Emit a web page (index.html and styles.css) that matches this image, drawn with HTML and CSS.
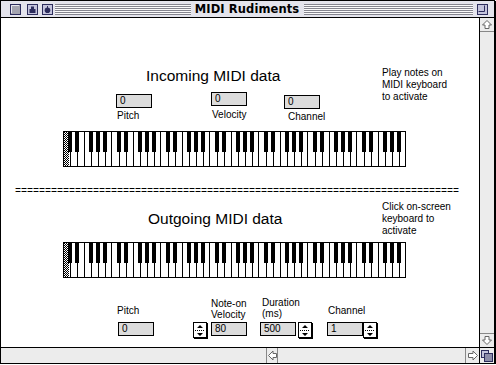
FILE: index.html
```html
<!DOCTYPE html>
<html lang="en">
<head>
	<meta charset="UTF-8">
	<title>MIDI Rudiments</title>
	<link rel="stylesheet" href="styles.css">
</head>
<body>
<div class="window">
	<div class="titlebar">
		<div class="tb_side">
			<svg class="tbox tb_close" width="11" height="11" viewBox="0 0 11 11"><rect x="0.5" y="0.5" width="10" height="10" fill="#a4a4b0" stroke="#2c2c5c"/><path d="M1.5 9V1.5H9" stroke="#e8e8f0" fill="none"/></svg>
			<svg class="tbox tb_two" width="11" height="11" viewBox="0 0 11 11"><rect x="0.5" y="0.5" width="10" height="10" fill="#c4c4dc" stroke="#2c2c5c"/><path d="M4 2.5h3v2.5h-3z M2.5 5h6v4h-6z" fill="#2c2c5c"/></svg>
			<svg class="tbox tb_three" width="11" height="11" viewBox="0 0 11 11"><rect x="0.5" y="0.5" width="10" height="10" fill="#c4c4dc" stroke="#2c2c5c"/><circle cx="5.5" cy="6.3" r="2.8" fill="#2c2c5c"/><rect x="5" y="2" width="1" height="3" fill="#2c2c5c"/></svg>
			<span class="stripes"></span>
		</div>
		<span class="title">MIDI Rudiments</span>
		<div class="tb_side">
			<span class="stripes"></span>
			<svg class="tbox tb_zoom" width="11" height="11" viewBox="0 0 11 11"><rect x="0.5" y="0.5" width="10" height="10" fill="#c4c4dc" stroke="#2c2c5c"/><path d="M1.5 7.5H7.5V1.5" stroke="#2c2c5c" fill="none"/></svg>
		</div>
	</div>

	<div class="main">
		<div class="patcher">
			<div class="obj heading head_in">Incoming MIDI data</div>
			<div class="obj num num_in_pitch">0</div>
			<div class="obj num num_in_vel">0</div>
			<div class="obj num num_in_chan">0</div>
			<div class="obj label lab_in_pitch">Pitch</div>
			<div class="obj label lab_in_vel">Velocity</div>
			<div class="obj label lab_in_chan">Channel</div>
			<div class="obj note note_in">Play notes on<br>MIDI keyboard<br>to activate</div>

			<svg class="obj kslider ks_in" width="343" height="36" viewBox="0 0 343 36">
				<defs>
					<pattern id="octave" width="49" height="36" patternUnits="userSpaceOnUse">
						<path d="M7.5 0V36M14.5 0V36M21.5 0V36M28.5 0V36M35.5 0V36M42.5 0V36M48.5 0V36" stroke="#000"/>
						<rect x="5" y="0" width="4" height="21"/>
						<rect x="12" y="0" width="4" height="21"/>
						<rect x="26" y="0" width="4" height="21"/>
						<rect x="33" y="0" width="4" height="21"/>
						<rect x="40" y="0" width="4" height="21"/>
					</pattern>
					<pattern id="dither" width="2" height="2" patternUnits="userSpaceOnUse">
						<rect width="1" height="1"/>
						<rect x="1" y="1" width="1" height="1"/>
					</pattern>
				</defs>
				<rect width="343" height="36" fill="#fff"/>
				<rect x="1" y="1" width="5" height="34" fill="url(#dither)"/>
				<rect width="343" height="36" fill="url(#octave)"/>
				<rect x="0.5" y="0.5" width="342" height="35" fill="none" stroke="#000"/>
			</svg>

			<div class="obj rule">==========================================================================</div>

			<div class="obj heading head_out">Outgoing MIDI data</div>
			<div class="obj note note_out">Click on-screen<br>keyboard to<br>activate</div>

			<svg class="obj kslider ks_out" width="343" height="36" viewBox="0 0 343 36">
				<rect width="343" height="36" fill="#fff"/>
				<rect x="1" y="1" width="5" height="34" fill="url(#dither)"/>
				<rect width="343" height="36" fill="url(#octave)"/>
				<rect x="0.5" y="0.5" width="342" height="35" fill="none" stroke="#000"/>
			</svg>

			<div class="obj label lab_out_pitch">Pitch</div>
			<div class="obj label lab_out_vel">Note-on<br>Velocity</div>
			<div class="obj label lab_out_dur">Duration<br>(ms)</div>
			<div class="obj label lab_out_chan">Channel</div>

			<div class="obj num num_out_pitch">0</div>
			<svg class="obj spin spin_vel" width="15" height="17" viewBox="0 0 15 17"><rect x="0.5" y="0.5" width="13" height="15" fill="#fff" stroke="#000"/><path d="M14.5 1V17M1 16.5H15" stroke="#000"/><path d="M7 3L4 6H10Z M4 11H10L7 14Z"/><path d="M2 8.5H12" stroke="#000" stroke-dasharray="1 1"/></svg>
			<div class="obj num num_out_vel">80</div>
			<div class="obj num num_out_dur">500</div>
			<svg class="obj spin spin_dur" width="15" height="17" viewBox="0 0 15 17"><rect x="0.5" y="0.5" width="13" height="15" fill="#fff" stroke="#000"/><path d="M14.5 1V17M1 16.5H15" stroke="#000"/><path d="M7 3L4 6H10Z M4 11H10L7 14Z"/><path d="M2 8.5H12" stroke="#000" stroke-dasharray="1 1"/></svg>
			<div class="obj num num_out_chan">1</div>
			<svg class="obj spin spin_chan" width="15" height="17" viewBox="0 0 15 17"><rect x="0.5" y="0.5" width="13" height="15" fill="#fff" stroke="#000"/><path d="M14.5 1V17M1 16.5H15" stroke="#000"/><path d="M7 3L4 6H10Z M4 11H10L7 14Z"/><path d="M2 8.5H12" stroke="#000" stroke-dasharray="1 1"/></svg>
		</div>

		<div class="vscroll">
			<span class="sbtn sbtn_up"><svg width="14" height="13" viewBox="0 0 14 13"><path d="M7 2.5L11.5 7H9V10.5H5V7H2.5Z" fill="#fff" stroke="#666"/></svg></span>
			<span class="track"></span>
			<span class="sbtn sbtn_down"><svg width="14" height="13" viewBox="0 0 14 13"><path d="M7 10.5L11.5 6H9V2.5H5V6H2.5Z" fill="#fff" stroke="#666"/></svg></span>
		</div>
	</div>

	<div class="hscroll">
		<span class="hs_blank"></span>
		<span class="hbtn hbtn_left"><svg width="10" height="15" viewBox="0 0 10 15"><path d="M1.5 7.5L6 3V5.5H9.5V9.5H6V12Z" fill="#fff" stroke="#666"/></svg></span>
		<span class="track"></span>
		<span class="hbtn hbtn_right"><svg width="13" height="15" viewBox="0 0 13 15"><path d="M11.5 7.5L7 3V5.5H2.5V9.5H7V12Z" fill="#fff" stroke="#666"/></svg></span>
		<span class="grow"><svg width="14" height="15" viewBox="0 0 14 15"><rect x="1.5" y="2.5" width="7" height="7" fill="#c4c4dc" stroke="#2c2c5c"/><rect x="4.5" y="5.5" width="8" height="8" fill="#8c8ca8" stroke="#2c2c5c"/></svg></span>
	</div>
</div>
</body>
</html>
```

FILE: styles.css
```css
html, body{
	margin: 0;
	background: #fff;
}
body{
	font-family: "Liberation Sans", Arial, sans-serif;
	color: #000;
}
.window{
	width: 493px;
	height: 362px;
	border: 1px solid #000;
	box-shadow: 1px 1px 0 #000;
	display: flex;
	flex-direction: column;
	background: #fff;
}

/* title bar */
.titlebar{
	height: 16px;
	flex: none;
	border-bottom: 1px solid #000;
	background: #e4e4ec;
	display: grid;
	grid-template-columns: 1fr auto 1fr;
	align-items: center;
}
.tb_side{
	display: flex;
	align-items: center;
	height: 16px;
}
.tbox{
	display: block;
	flex: none;
}
.tb_close{
	margin-left: 9px;
}
.tb_two{
	margin-left: 6px;
}
.tb_three{
	margin-left: 4px;
}
.tb_zoom{
	margin-left: 4px;
	margin-right: 6px;
}
.stripes{
	flex: 1;
	height: 11px;
	margin-left: 2px;
	background: repeating-linear-gradient(to bottom, #85858f 0 1px, #fafafa 1px 2px);
}
.tb_side:last-child .stripes{
	margin-left: 0;
}
.title{
	padding: 0 5px 0 4px;
	font-family: "DejaVu Sans", sans-serif;
	font-weight: bold;
	font-size: 11.5px;
	line-height: 16px;
	letter-spacing: 0.1px;
}

/* main area */
.main{
	height: 329px;
	flex: none;
	display: flex;
}
.patcher{
	width: 478px;
	height: 329px;
	position: relative;
	background: #fff;
	overflow: hidden;
}
.vscroll{
	width: 14px;
	border-left: 1px solid #000;
	background: #ececec;
	display: flex;
	flex-direction: column;
}
.sbtn{
	height: 13px;
	display: block;
}
.sbtn svg{
	display: block;
}
.sbtn_up{
	border-bottom: 1px solid #888;
}
.sbtn_down{
	border-top: 1px solid #888;
}
.track{
	flex: 1;
}

.hscroll{
	height: 15px;
	flex: none;
	border-top: 1px solid #000;
	background: #ececec;
	display: flex;
}
.hs_blank{
	width: 265px;
}
.hbtn{
	display: block;
}
.hbtn svg, .grow svg{
	display: block;
}
.hbtn_left{
	border-left: 1px solid #888;
	border-right: 1px solid #888;
}
.hbtn_right{
	border-left: 1px solid #888;
}
.grow{
	display: block;
	width: 14px;
	border-left: 1px solid #000;
}

/* patcher objects */
.obj{
	position: absolute;
	white-space: nowrap;
}
.heading{
	font-size: 15.5px;
	line-height: 18px;
}
.head_in{
	left: 145px;
	top: 49px;
}
.head_out{
	left: 147px;
	top: 192px;
}
.label, .note{
	font-size: 10px;
	line-height: 12px;
}
.note{
	line-height: 12px;
}
.note_in{
	left: 381px;
	top: 49px;
}
.note_out{
	left: 381px;
	top: 183px;
}
.num{
	width: 36px;
	height: 14px;
	box-sizing: border-box;
	border: 1px solid #000;
	background: #dcdcdc;
	font-size: 10px;
	line-height: 12px;
	padding-left: 3px;
}
.num_in_pitch{
	left: 115px;
	top: 76px;
}
.num_in_vel{
	left: 210px;
	top: 74px;
}
.num_in_chan{
	left: 283px;
	top: 77px;
}
.lab_in_pitch{
	left: 116px;
	top: 92px;
}
.lab_in_vel{
	left: 211px;
	top: 91px;
}
.lab_in_chan{
	left: 287px;
	top: 93px;
}
.kslider{
	display: block;
}
.ks_in{
	left: 62px;
	top: 113px;
}
.ks_out{
	left: 62px;
	top: 224px;
}
.rule{
	left: 14px;
	top: 168px;
	font-family: "Liberation Mono", monospace;
	font-size: 10px;
	line-height: 12px;
}
.lab_out_pitch{
	left: 116px;
	top: 287px;
}
.lab_out_vel{
	left: 210px;
	top: 280px;
	line-height: 11px;
}
.lab_out_dur{
	left: 261px;
	top: 279px;
	line-height: 11px;
}
.lab_out_chan{
	left: 327px;
	top: 287px;
}
.num_out_pitch{
	left: 117px;
	top: 304px;
}
.num_out_vel{
	left: 210px;
	top: 304px;
}
.num_out_dur{
	left: 259px;
	top: 304px;
}
.num_out_chan{
	left: 326px;
	top: 304px;
}
.spin{
	display: block;
}
.spin_vel{
	left: 192px;
	top: 304px;
}
.spin_dur{
	left: 297px;
	top: 304px;
}
.spin_chan{
	left: 362px;
	top: 304px;
}
```
